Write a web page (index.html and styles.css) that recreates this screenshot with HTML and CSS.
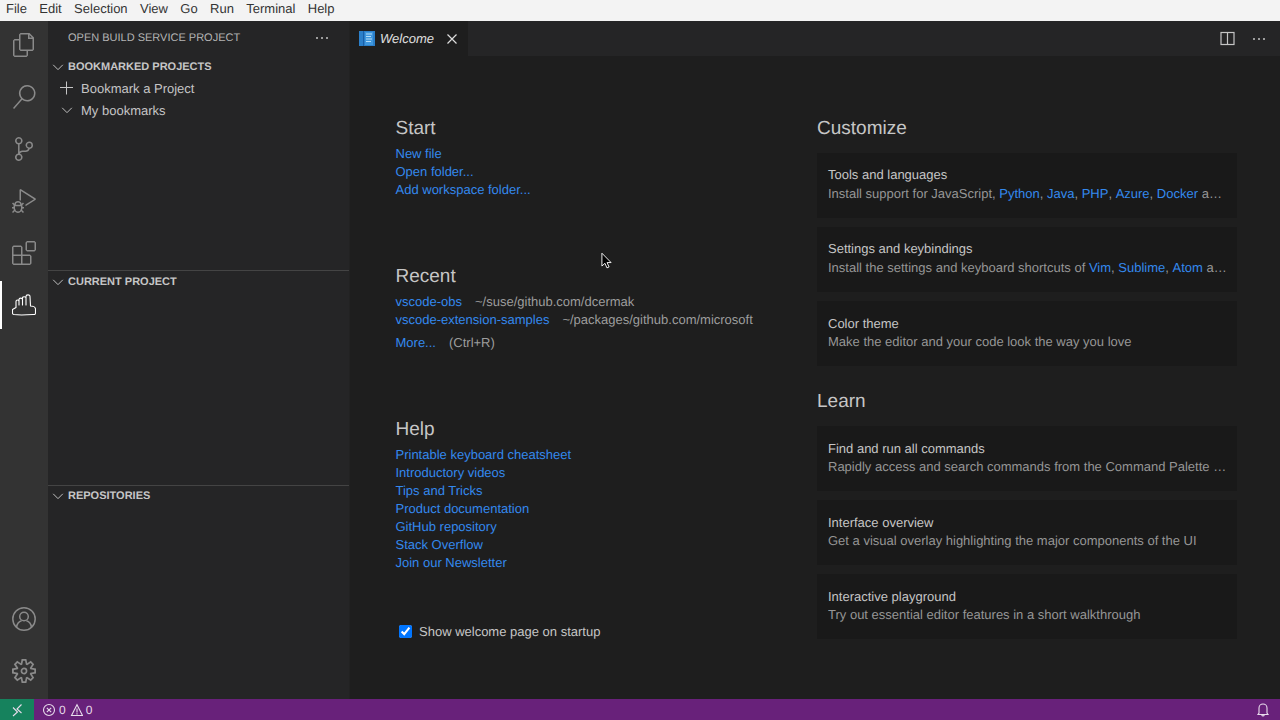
FILE: index.html
```html
<!DOCTYPE html>
<html lang="en">
<head>
<meta charset="utf-8">
<title>Welcome - Visual Studio Code</title>
<link rel="stylesheet" href="styles.css">
</head>
<body>
<div class="app">
  <nav class="menubar">
    <span class="menu-item">File</span><span class="menu-item">Edit</span><span class="menu-item">Selection</span><span class="menu-item">View</span><span class="menu-item">Go</span><span class="menu-item">Run</span><span class="menu-item">Terminal</span><span class="menu-item">Help</span>
  </nav>
  <div class="workbench">
    <aside class="activitybar">
      <div class="act-group">
        <div class="act-item"><svg class="act-icon" viewBox="0 0 24 24"><path fill-rule="evenodd" d="M17.5 0h-9L7 1.5V6H2.5L1 7.5v15.07L2.5 24h12.07L16 22.57V18h4.7l1.3-1.43V4.5L17.5 0zm0 2.12l2.38 2.38H17.5V2.12zm-3 20.38h-12v-15H7v9.07L8.5 18h6v4.5zm6-6h-12v-15H16V6h4.5v10.5z"/></svg></div>
        <div class="act-item"><svg class="act-icon" viewBox="0 0 24 24"><path fill-rule="evenodd" d="M15.25 0a8.25 8.25 0 0 0-6.18 13.72L1 22.88l1.12 1 8.05-9.12A8.251 8.251 0 1 0 15.25.01V0zm0 15a6.75 6.75 0 1 1 0-13.5 6.75 6.75 0 0 1 0 13.5z"/></svg></div>
        <div class="act-item"><svg class="act-icon" viewBox="0 0 24 24"><path fill-rule="evenodd" d="M21.007 8.222A3.738 3.738 0 0 0 15.045 5.2a3.737 3.737 0 0 0 1.156 6.583 2.988 2.988 0 0 1-2.668 1.67h-2.99a4.456 4.456 0 0 0-2.989 1.165V7.4a3.737 3.737 0 1 0-1.494 0v9.117a3.776 3.776 0 1 0 1.816.099 2.99 2.99 0 0 1 2.668-1.667h2.99a4.484 4.484 0 0 0 4.223-3.039 3.736 3.736 0 0 0 3.25-3.687zM4.565 3.738a2.242 2.242 0 1 1 4.484 0 2.242 2.242 0 0 1-4.484 0zm4.484 16.441a2.242 2.242 0 1 1-4.484 0 2.242 2.242 0 0 1 4.484 0zm8.221-9.715a2.242 2.242 0 1 1 0-4.485 2.242 2.242 0 0 1 0 4.485z"/></svg></div>
        <div class="act-item"><svg class="act-icon" viewBox="0 0 24 24"><path fill-rule="evenodd" d="M10.94 13.5l-1.32 1.32a3.73 3.73 0 0 0-7.24 0L1.06 13.5 0 14.56l1.72 1.72-.22.22V18H0v1.5h1.5v.08c.077.489.214.966.41 1.42L0 22.94 1.06 24l1.65-1.65A4.308 4.308 0 0 0 6 24a4.31 4.31 0 0 0 3.29-1.65L10.94 24 12 22.94 10.09 21c.198-.464.336-.951.41-1.45v-.05H12V18h-1.5v-1.5l-.22-.22L12 14.56l-1.06-1.06zM6 13.5a2.25 2.25 0 0 1 2.25 2.25h-4.5A2.25 2.25 0 0 1 6 13.5zm3 6a3.33 3.33 0 0 1-3 3 3.33 3.33 0 0 1-3-3v-2.25h6v2.25zm14.76-9.9v1.26L13.5 17.37v-1.76l8.5-5.37L9 2v9.57a5.2 5.2 0 0 0-1.5-.37V.63L8.64 0l15.12 9.6z"/></svg></div>
        <div class="act-item"><svg class="act-icon" viewBox="0 0 24 24"><path fill-rule="evenodd" d="M13.5 1.5L15 0h7.5L24 1.5V9l-1.5 1.5H15L13.5 9V1.5zm1.5 0V9h7.5V1.5H15zM0 15V6l1.5-1.5H9L10.5 6v7.5H18l1.5 1.5v7.5L18 24H1.5L0 22.5V15zm9-1.5V6H1.5v7.5H9zM9 15H1.5v7.5H9V15zm1.5 7.5H18V15h-7.5v7.5z"/></svg></div>
        <div class="act-item act-active"><svg class="act-icon" viewBox="0 0 24 24"><path fill="none" stroke="currentColor" stroke-width="1.1" stroke-linejoin="round" d="M.5 20.5V16.5L4 14.5V8.5C4 6.5 7 6.5 7 8.5V12V6.5C7 4.7 10.5 4.7 10.5 6.5V12V5C10.5 3.3 14 3.3 14 5V12V3.5C14 1.5 18 1.2 18 3.5L18.5 13C20.5 13 23.5 14 23.5 16V20C23.5 21.5 22.5 21.7 21 21.5C14 22 7 22.3 2 21.5C1 21.3 .5 21 .5 20.5Z"/></svg></div>
      </div>
      <div class="act-group">
        <div class="act-item"><svg class="act-icon" viewBox="0 0 24 24"><circle cx="12" cy="12" r="11.2" fill="none" stroke="currentColor" stroke-width="1.5"/><circle cx="12" cy="9.5" r="4.3" fill="none" stroke="currentColor" stroke-width="1.5"/><path fill="none" stroke="currentColor" stroke-width="1.5" d="M4.6 20.3c.4-4 2.8-6.1 5-6.6M19.4 20.3c-.4-4-2.8-6.1-5-6.6"/></svg></div>
        <div class="act-item"><svg class="act-icon" viewBox="0 0 24 24"><path fill-rule="evenodd" d="M19.85 8.75l4.15.83v4.84l-4.15.83 2.35 3.52-3.43 3.43-3.52-2.35-.83 4.15H9.58l-.83-4.15-3.52 2.35-3.43-3.43 2.35-3.52L0 14.42V9.58l4.15-.83L1.8 5.23 5.23 1.8l3.52 2.35L9.58 0h4.84l.83 4.15 3.52-2.35 3.43 3.43-2.35 3.52zm-1.57 5.07l4-.81v-2l-4-.81-.54-1.3 2.29-3.43-1.43-1.43-3.43 2.29-1.3-.54-.81-4h-2l-.81 4-1.3.54-3.43-2.29-1.43 1.43L6.38 8.9l-.54 1.3-4 .81v2l4 .81.54 1.3-2.29 3.43 1.43 1.43 3.43-2.29 1.3.54.81 4h2l.81-4 1.3-.54 3.43 2.29 1.43-1.43-2.29-3.43.54-1.3zm-8.186-4.672A3.43 3.43 0 0 1 12 8.57 3.44 3.44 0 0 1 15.43 12a3.43 3.43 0 1 1-5.336-2.852zm.956 4.274c.281.188.612.288.95.288A1.7 1.7 0 0 0 13.71 12a1.71 1.71 0 1 0-2.66 1.422z"/></svg></div>
      </div>
    </aside>
    <aside class="sidebar">
      <header class="side-title">
        <span>OPEN BUILD SERVICE PROJECT</span>
        <svg class="dots" viewBox="0 0 16 16"><circle cx="3" cy="8" r="1"/><circle cx="8" cy="8" r="1"/><circle cx="13" cy="8" r="1"/></svg>
      </header>
      <section class="pane pane-bookmarks">
        <h3 class="pane-head"><svg class="chev" viewBox="0 0 16 16"><path d="M2.5 5.5L8 11l5.5-5.5"/></svg>BOOKMARKED PROJECTS</h3>
        <div class="row"><svg class="row-icon" viewBox="0 0 16 16"><path d="M8.5 1.5v13M2 7.5h13"/></svg>Bookmark a Project</div>
        <div class="row"><svg class="row-icon chev-small" viewBox="0 0 16 16"><path d="M2.5 5.5L8 11l5.5-5.5"/></svg>My bookmarks</div>
      </section>
      <section class="pane pane-current">
        <h3 class="pane-head"><svg class="chev" viewBox="0 0 16 16"><path d="M2.5 5.5L8 11l5.5-5.5"/></svg>CURRENT PROJECT</h3>
      </section>
      <section class="pane pane-repos">
        <h3 class="pane-head"><svg class="chev" viewBox="0 0 16 16"><path d="M2.5 5.5L8 11l5.5-5.5"/></svg>REPOSITORIES</h3>
      </section>
    </aside>
    <main class="editor">
      <div class="tabs">
        <div class="tab">
          <svg class="tab-icon" viewBox="0 0 16 15"><rect width="16" height="15" fill="#2b7fc9"/><rect x="4" y="0" width="1" height="15" fill="#1a5fa8"/><rect x="6" y="1" width="8" height="13" fill="#3f97dd"/><path d="M7 3h6M7 5.5h5M7 8h6M7 10.5h5" stroke="#b5dcf7" stroke-width="1"/></svg>
          <span class="tab-label">Welcome</span>
          <svg class="tab-close" viewBox="0 0 16 16"><path d="M3.5 3.5l9 9M12.5 3.5l-9 9"/></svg>
        </div>
        <div class="tab-actions">
          <svg class="split" viewBox="0 0 16 16"><rect x="2" y="2.5" width="13" height="12"/><path d="M8.5 2.5v12"/></svg>
          <svg class="dots" viewBox="0 0 16 16"><circle cx="3" cy="8" r="1"/><circle cx="8" cy="8" r="1"/><circle cx="13" cy="8" r="1"/></svg>
        </div>
      </div>
      <div class="welcome">
        <div class="col-left">
          <h2 class="heading">Start</h2>
          <ul class="links">
            <li><a>New file</a></li>
            <li><a>Open folder...</a></li>
            <li><a>Add workspace folder...</a></li>
          </ul>
          <h2 class="heading heading-gap">Recent</h2>
          <ul class="links">
            <li><a>vscode-obs</a><span class="path">~/suse/github.com/dcermak</span></li>
            <li><a>vscode-extension-samples</a><span class="path">~/packages/github.com/microsoft</span></li>
            <li class="more"><a>More...</a><span class="path">(Ctrl+R)</span></li>
          </ul>
          <h2 class="heading heading-gap">Help</h2>
          <ul class="links">
            <li><a>Printable keyboard cheatsheet</a></li>
            <li><a>Introductory videos</a></li>
            <li><a>Tips and Tricks</a></li>
            <li><a>Product documentation</a></li>
            <li><a>GitHub repository</a></li>
            <li><a>Stack Overflow</a></li>
            <li><a>Join our Newsletter</a></li>
          </ul>
          <label class="startup"><input type="checkbox" checked><span>Show welcome page on startup</span></label>
        </div>
        <div class="col-right">
          <h2 class="heading">Customize</h2>
          <div class="cards">
            <div class="card card-links"><div class="card-title">Tools and languages</div><div class="card-desc">Install support for JavaScript, <a>Python</a>, <a>Java</a>, <a>PHP</a>, <a>Azure</a>, <a>Docker</a> and more</div></div>
            <div class="card card-links"><div class="card-title">Settings and keybindings</div><div class="card-desc">Install the settings and keyboard shortcuts of <a>Vim</a>, <a>Sublime</a>, <a>Atom</a> and others</div></div>
            <div class="card"><div class="card-title">Color theme</div><div class="card-desc">Make the editor and your code look the way you love</div></div>
          </div>
          <h2 class="heading heading-learn">Learn</h2>
          <div class="cards">
            <div class="card"><div class="card-title">Find and run all commands</div><div class="card-desc">Rapidly access and search commands from the Command Palette (Ctrl+Shift+P)</div></div>
            <div class="card"><div class="card-title">Interface overview</div><div class="card-desc">Get a visual overlay highlighting the major components of the UI</div></div>
            <div class="card"><div class="card-title">Interactive playground</div><div class="card-desc">Try out essential editor features in a short walkthrough</div></div>
          </div>
        </div>
      </div>
    </main>
  </div>
  <footer class="statusbar">
    <div class="remote"><svg viewBox="0 0 16 16"><path d="M4 5.5L8.5 10 4 14M12.5 2.5L8 7l4.5 4"/></svg></div>
    <div class="problems">
      <svg viewBox="0 0 14 14"><circle cx="7" cy="7" r="5.5"/><path d="M4.8 4.8l4.4 4.4M9.2 4.8l-4.4 4.4"/></svg><span>0</span>
      <svg class="warn" viewBox="0 0 13 14"><path d="M7 1.8l5.5 10.7H1.5zM7 5.5v4M7 10.2v1.2"/></svg><span>0</span>
    </div>
    <div class="bell"><svg viewBox="0 0 16 16"><path d="M4 11V6a4 4 0 0 1 8 0v5l1 1.5H3zM6.7 13a1.4 1.4 0 0 0 2.6 0"/></svg></div>
  </footer>
  <svg class="cursor" viewBox="0 0 12 19"><path d="M1 1v14l3.3-3 2.2 5 2.3-1-2.2-4.8H11z" fill="#000" stroke="#fff" stroke-width="1"/></svg>
</div>
</body>
</html>
```
FILE: styles.css
```css
* { box-sizing: border-box; }
html, body { margin: 0; height: 100%; overflow: hidden; }
body { font-family: "Liberation Sans", Arial, sans-serif; font-size: 13px; color: #c6c6c6; background: #1e1e1e; text-rendering: geometricPrecision; }
.app { position: relative; width: 1280px; height: 720px; display: flex; flex-direction: column; }

.menubar { height: 21px; background: #f3f3f3; color: #333; display: flex; align-items: center; flex: none; padding-bottom: 4px; }
.menu-item { padding: 0 6.2px; line-height: 17px; }
.menu-item:first-child { padding-left: 6px; }

.workbench { flex: 1; display: flex; min-height: 0; }

.activitybar { width: 48px; flex: none; background: #333; display: flex; flex-direction: column; justify-content: space-between; }
.act-item { position: relative; height: 48px; margin-bottom: 4px; display: flex; align-items: center; justify-content: center; color: #8a8a8a; }
.act-icon { width: 24px; height: 24px; fill: currentColor; }
.act-active { color: #fff; }
.act-active::before { content: ""; position: absolute; left: 0; top: 0; bottom: 0; width: 2px; background: #fff; }

.sidebar { width: 302px; flex: none; background: #252526; display: flex; flex-direction: column; border-right: 1px solid #222; }
.side-title { height: 34px; flex: none; display: flex; align-items: center; justify-content: space-between; padding: 0 19px 0 20px; font-size: 11px; color: #b4b4b4; }
.dots { width: 16px; height: 16px; fill: #c5c5c5; flex: none; }
.pane { flex: none; }
.pane-bookmarks { height: 215px; }
.pane-current { height: 215px; border-top: 1px solid #444; }
.pane-repos { flex: 1; border-top: 1px solid #444; }
.pane-head { margin: 0; height: 22px; display: flex; align-items: center; padding: 2px 0 0 3px; font-size: 11px; font-weight: bold; color: #c6c6c6; }
.pane-current .pane-head { margin-top: -1px; }
.pane-repos .pane-head { margin-top: -2px; }
.chev { width: 14px; height: 14px; margin-right: 3px; fill: none; stroke: #c5c5c5; stroke-width: 1.1; }
.row { height: 22px; display: flex; align-items: center; padding-left: 10px; }
.row-icon { width: 16px; height: 16px; margin-right: 7px; fill: none; stroke: #c5c5c5; stroke-width: 1; }
.chev-small { width: 14px; height: 14px; margin-left: 2px; margin-right: 7px; stroke-width: 1.1; }

.editor { flex: 1; min-width: 0; display: flex; flex-direction: column; background: #1e1e1e; }
.tabs { height: 35px; flex: none; background: #252526; display: flex; align-items: stretch; justify-content: space-between; }
.tab { width: 118px; background: #1e1e1e; display: flex; align-items: center; padding-left: 9px; }
.tab-icon { width: 16px; height: 15px; margin-right: 5px; }
.tab-label { font-style: italic; color: #fff; opacity: .86; }
.tab-close { width: 16px; height: 16px; margin-left: 10px; fill: none; stroke: #ddd; stroke-width: 1.2; }
.tab-actions { display: flex; align-items: center; gap: 16px; padding-right: 13px; }
.split { width: 16px; height: 16px; margin-top: -1px; fill: none; stroke: #c5c5c5; stroke-width: 1.2; }

.welcome { flex: 1; display: flex; padding: 58px 43px 0 0; }
.col-left { width: 467px; padding-left: 45.5px; flex: none; }
.col-right { width: 420px; flex: none; }
.heading { margin: 0; height: 26px; line-height: 30px; font-size: 19px; font-weight: normal; }
.heading-gap { margin-top: 63px; }
.heading-learn { margin-top: 21px; }
.links { list-style: none; margin: 5px 0 0; padding: 0; line-height: 18px; }
.links li { height: 18px; white-space: nowrap; }
.links .more { margin-top: 5px; }
a { color: #3489ee; }
.path { margin-left: 13px; color: #9d9d9d; }
.startup { display: flex; align-items: center; height: 18px; margin-top: 50px; }
.startup input { margin: 3px 7px 3px 3.5px; }

.cards { margin-top: 13px; display: flex; flex-direction: column; gap: 9px; }
.card { height: 65px; background: #191919; padding: 14px 10px 0 11px; }
.card-title { line-height: 18px; height: 18px; }
.card-desc { line-height: 18px; height: 18px; color: #969696; white-space: nowrap; overflow: hidden; text-overflow: ellipsis; }
.card-desc a { display: inline-block; }
.card-links { padding-top: 13px; }
.card-links .card-title { margin-bottom: 1px; }

.statusbar { height: 21px; flex: none; background: #68217a; color: #fff; display: flex; align-items: center; font-size: 12px; }
.remote { width: 34px; height: 100%; background: #16825d; display: flex; align-items: center; justify-content: center; }
.statusbar svg { width: 14px; height: 14px; fill: none; stroke: #e8dcec; stroke-width: 1.1; flex: none; }
.statusbar .remote svg { width: 16px; height: 16px; }
.statusbar .warn { width: 13px; }
.problems { display: flex; align-items: center; gap: 3px; padding-left: 8px; color: #e8dcec; }
.problems span + svg { margin-left: 1px; }
.bell { margin-left: auto; padding-right: 9px; display: flex; }
.statusbar .bell svg { width: 16px; height: 16px; }

.cursor { position: absolute; left: 601px; top: 252px; width: 11px; height: 18px; }
```
